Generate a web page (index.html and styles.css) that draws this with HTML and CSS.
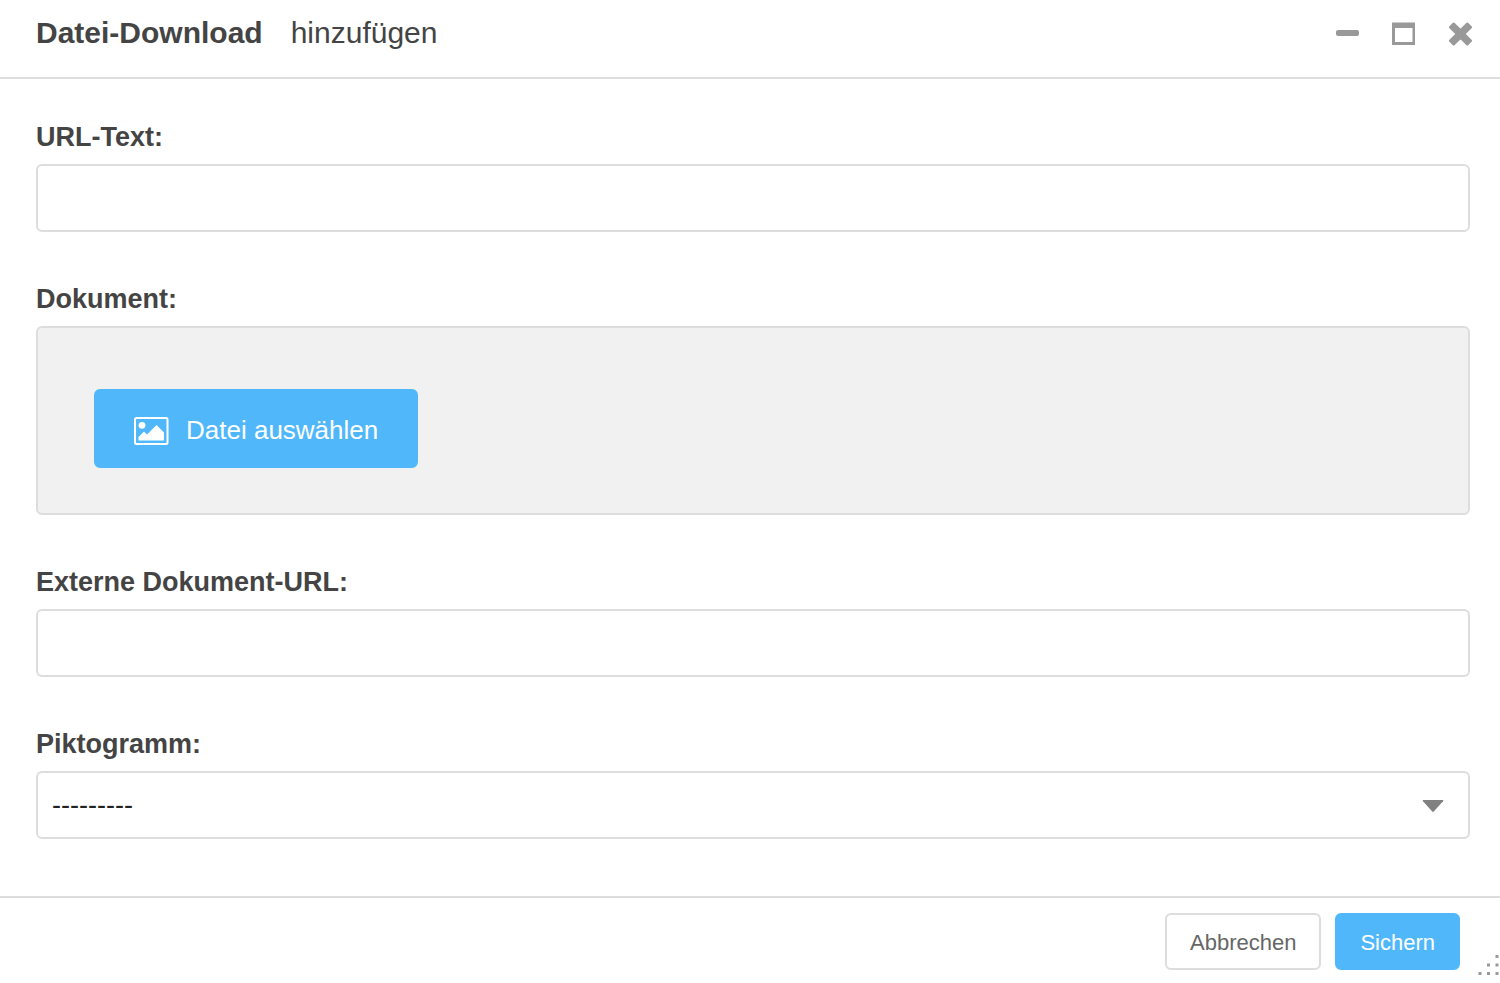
FILE: index.html
```html
<!DOCTYPE html>
<html lang="de">
<head>
<meta charset="utf-8">
<title>Datei-Download hinzufügen</title>
<link rel="stylesheet" href="styles.css">
</head>
<body>
<form class="modal">
  <header class="modal-head">
    <h1 class="title">Datei-Download <small class="subtitle">hinzufügen</small></h1>
    <div class="window-controls">
      <button type="button" class="icon-button" aria-label="Minimieren">
        <svg width="24" height="24" viewBox="0 0 24 24"><rect x="0" y="8" width="23" height="6" rx="2" fill="#999"/></svg>
      </button>
      <button type="button" class="icon-button" aria-label="Maximieren">
        <svg width="24" height="24" viewBox="0 0 24 24"><path fill="#999" fill-rule="evenodd" d="M0 .5h23v22.500H0zM3 6v14h17.500V6z"/></svg>
      </button>
      <button type="button" class="icon-button" aria-label="Schließen">
        <svg width="24" height="24" viewBox="0 0 24 24"><path fill="#999" stroke="#999" stroke-width="3" stroke-linejoin="round" d="M2.500 5.200L5.700 2l6.800 6.800L19.300 2l3.200 3.200-6.800 6.800 6.800 6.800-3.200 3.200-6.800-6.800L5.700 22l-3.200-3.200L9.300 12z"/></svg>
      </button>
    </div>
  </header>

  <main class="fields">
    <div class="field">
      <label class="label" for="url-text">URL-Text:</label>
      <input class="control" id="url-text" type="text">
    </div>
    <div class="field" role="group" aria-labelledby="document-label">
      <span class="label" id="document-label">Dokument:</span>
      <div class="dropzone">
        <button type="button" class="button choose">
          <svg width="35" height="28" viewBox="0 0 35 28"><rect x="1" y="1" width="32.500" height="26" rx="1.500" fill="none" stroke="#fff" stroke-width="2"/><circle cx="8" cy="8.300" r="3.400" fill="#fff"/><path fill="#fff" d="M4.500 23.500v-3.500l5.500-5.500 3 3L22.500 8l7.500 7.500v8z"/></svg>
          Datei auswählen
        </button>
      </div>
    </div>
    <div class="field">
      <label class="label" for="external-url">Externe Dokument-URL:</label>
      <input class="control" id="external-url" type="text">
    </div>
    <div class="field">
      <label class="label" for="icon">Piktogramm:</label>
      <div class="select-wrap">
        <select class="control" id="icon"><option>---------</option></select>
        <svg class="caret" width="22" height="14" viewBox="0 0 22 14"><path fill="#808080" d="M1.500 1h19q1.500 0 .5 1.300L12 12.300q-1 1-2 0L1 2.300Q0 1 1.500 1z"/></svg>
      </div>
    </div>
  </main>

  <footer class="modal-foot">
    <button type="button" class="button cancel">Abbrechen</button>
    <button type="submit" class="button save">Sichern</button>
    <svg class="grip" width="24" height="24" viewBox="0 0 24 24" fill="#999"><path d="M19.500 1h3v3h-3zM11 9.500h3v3h-3zM19.500 9.500h3v3h-3zM2.500 18h3v3h-3zM11 18h3v3h-3zM19.500 18h3v3h-3z"/></svg>
  </footer>
</form>
</body>
</html>
```
FILE: styles.css
```css
* {
  box-sizing: border-box;
}

body {
  margin: 0;
  background: #fff;
  color: #444;
  font-family: "Liberation Sans", Arial, sans-serif;
  font-size: 27px;
}

button,
input,
select {
  font: inherit;
}

svg {
  display: block;
  flex: none;
}

.modal {
  display: flex;
  flex-direction: column;
  min-height: 100vh;
}

.modal-head {
  display: flex;
  justify-content: space-between;
  align-items: flex-start;
  padding: 15px 28px 26px 36px;
  border-bottom: 2px solid #ddd;
}

.title {
  display: flex;
  gap: 28px;
  margin: 0;
  font-size: 30px;
  line-height: 36px;
}

.subtitle {
  font-size: 30px;
  font-weight: 400;
}

.window-controls {
  display: flex;
  gap: 32px;
  padding-top: 7px;
}

.icon-button {
  padding: 0;
  border: 0;
  background: none;
}

.fields {
  display: flex;
  flex: 1;
  flex-direction: column;
  gap: 51px;
  padding: 42px 30px 57px 36px;
}

.field {
  display: flex;
  flex-direction: column;
  gap: 11px;
}

.label {
  font-weight: 700;
  line-height: 32px;
}

.control {
  width: 100%;
  height: 68px;
  padding: 0 14px;
  border: 2px solid #ddd;
  border-radius: 6px;
  background: #fff;
  color: #222;
}

select.control {
  display: block;
  appearance: none;
}

.select-wrap {
  position: relative;
}

.caret {
  position: absolute;
  top: 28px;
  right: 26px;
  pointer-events: none;
}

.dropzone {
  padding: 61px 56px 45px;
  border: 2px solid #ddd;
  border-radius: 6px;
  background: #f1f1f1;
}

.button {
  border: 2px solid #50b8fa;
  border-radius: 6px;
  background: #50b8fa;
  color: #fff;
  font-size: 22px;
}

.choose {
  display: flex;
  align-items: center;
  gap: 17px;
  height: 79px;
  padding: 4px 38px 0;
  font-size: 26px;
}

.modal-foot {
  position: relative;
  display: flex;
  justify-content: flex-end;
  gap: 14px;
  padding: 15px 40px 13px;
  border-top: 2px solid #ddd;
}

.cancel,
.save {
  height: 57px;
  padding: 2px 23px 0;
}

.cancel {
  border-color: #ddd;
  background: #fff;
  color: #666;
}

.grip {
  position: absolute;
  right: 0;
  bottom: 5px;
}
```
